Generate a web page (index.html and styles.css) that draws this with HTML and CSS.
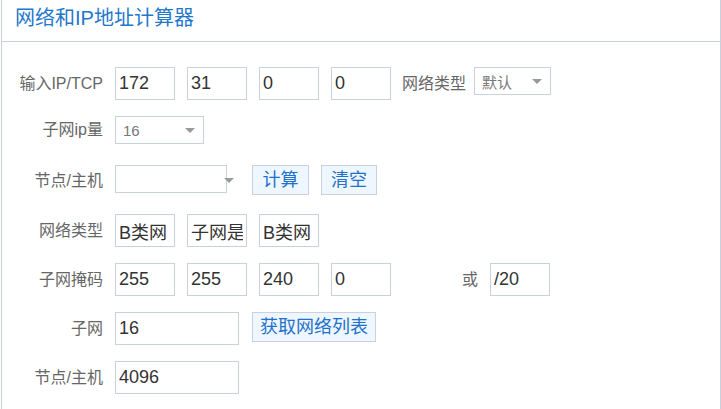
FILE: index.html
```html
<!DOCTYPE html>
<html lang="zh-CN">
<head>
    <meta charset="UTF-8">
    <meta name="viewport" content="width=device-width, initial-scale=1.0">
    <title>网络和IP地址计算器</title>
    <link rel="stylesheet" href="styles.css">
</head>
<body>

    <div class="panel">
        <div class="panel-head">网络和IP地址计算器</div>

        <div class="panel-body">
            <div class="row">
                <label class="label">输入IP/TCP</label>
                <input class="box box-sm" type="text" value="172">
                <input class="box box-sm" type="text" value="31">
                <input class="box box-sm" type="text" value="0">
                <input class="box box-sm" type="text" value="0">
                <label class="label-inline">网络类型</label>
                <div class="select select-type">
                    <span>默认</span>
                    <span class="caret"></span>
                </div>
            </div>

            <div class="row">
                <label class="label label-short">子网ip量</label>
                <div class="select select-count">
                    <span>16</span>
                    <span class="caret"></span>
                </div>
            </div>

            <div class="row">
                <label class="label label-mid">节点/主机</label>
                <input class="box box-combo" type="text" value="">
                <span class="caret caret-out"></span>
                <button class="btn btn-first">计算</button>
                <button class="btn btn-second">清空</button>
            </div>

            <div class="row">
                <label class="label">网络类型</label>
                <input class="box box-sm" type="text" value="B类网">
                <input class="box box-sm" type="text" value="子网是">
                <input class="box box-sm" type="text" value="B类网">
            </div>

            <div class="row">
                <label class="label">子网掩码</label>
                <input class="box box-sm" type="text" value="255">
                <input class="box box-sm" type="text" value="255">
                <input class="box box-sm" type="text" value="240">
                <input class="box box-sm" type="text" value="0">
                <label class="label-or">或</label>
                <input class="box box-sm" type="text" value="/20">
            </div>

            <div class="row">
                <label class="label">子网</label>
                <input class="box box-md" type="text" value="16">
                <button class="btn btn-wide">获取网络列表</button>
            </div>

            <div class="row">
                <label class="label">节点/主机</label>
                <input class="box box-md" type="text" value="4096">
            </div>
        </div>
    </div>

</body>
</html>
```

FILE: styles.css
```css
/* page */
body {
    margin: 0;
    font-family: "Liberation Sans", "Noto Sans CJK SC", sans-serif;
    background-color: #fff;
    color: #333;
}

.panel {
    width: 718px;
    min-height: 409px;
    margin-left: 1px;
    border-left: 1px solid #c9d0de;
    border-right: 1px solid #c9d0de;
}

.panel-head {
    height: 41px;
    line-height: 37px;
    padding-left: 13px;
    font-size: 20px;
    color: #1f78cc;
    border-bottom: 1px solid #c9d0de;
}

.panel-body {
    padding-top: 25px;
}

/* rows */
.row {
    display: flex;
    align-items: flex-start;
    height: 33px;
    margin-bottom: 16px;
}

.label {
    width: 101px;
    margin-right: 12px;
    text-align: right;
    font-size: 16px;
    line-height: 33px;
    color: #666;
    white-space: nowrap;
}
.label-short {
    line-height: 28px;
}
.label-mid {
    line-height: 31px;
}

.label-inline {
    margin: 0 8px 0 -1px;
    font-size: 16px;
    line-height: 33px;
    color: #666;
    white-space: nowrap;
}

.label-or {
    margin: 0 12px 0 59px;
    font-size: 16px;
    line-height: 33px;
    color: #666;
}

/* inputs */
.box {
    box-sizing: border-box;
    height: 33px;
    padding: 0 3px;
    margin: 0 12px 0 0;
    border: 1px solid #c9d0de;
    border-radius: 0;
    font-family: inherit;
    font-size: 18px;
    color: #333;
    background: #fff;
    outline: none;
}
.box-sm {
    width: 60px;
}
.box-md {
    width: 124px;
    margin-right: 13px;
}
.box-combo {
    width: 112px;
    height: 28px;
    margin-right: 0;
}

/* fake selects */
.select {
    box-sizing: border-box;
    height: 28px;
    display: flex;
    align-items: center;
    justify-content: space-between;
    padding: 0 8px 0 7px;
    border: 1px solid #c9d0de;
    font-size: 15px;
    color: #777;
}
.select-type {
    width: 77px;
}
.select-count {
    width: 89px;
}

.caret {
    width: 0;
    height: 0;
    border-left: 5px solid transparent;
    border-right: 5px solid transparent;
    border-top: 5px solid #999;
}
.caret-out {
    margin: 13px 18px 0 -3px;
}

/* buttons */
.btn {
    box-sizing: border-box;
    height: 30px;
    padding: 0;
    margin-right: 12px;
    border: 1px solid #c9d0de;
    background-color: #eef6ff;
    color: #1f72c8;
    font-family: inherit;
    font-size: 18px;
    line-height: 26px;
    text-align: center;
    white-space: nowrap;
    cursor: pointer;
}
.btn-first {
    width: 57px;
}
.btn-second {
    width: 56px;
}
.btn-wide {
    width: 124px;
}
```
